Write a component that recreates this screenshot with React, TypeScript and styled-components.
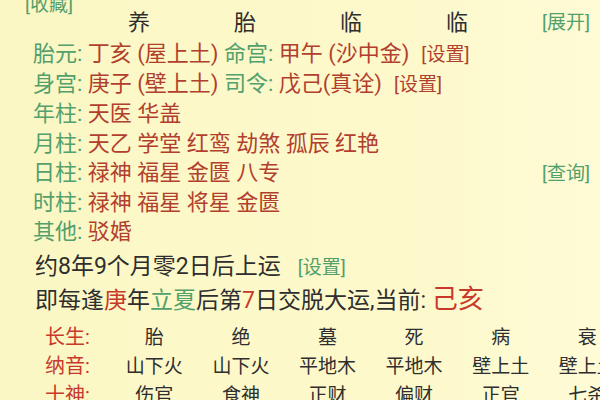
import React from 'react';
import styled, { createGlobalStyle } from 'styled-components';

const GlobalStyle = createGlobalStyle`
  html, body {
    margin: 0;
    padding: 0;
  }
  body {
    font-family: Roboto, "Noto Sans CJK SC", sans-serif;
    background: #fcf8c8;
  }
`;

const GREEN = '#52a06c';
const BROWN = '#b23f2e';
const RED = '#c8392b';
const DARK = '#2e2e2e';

const Page = styled.div`
  width: 600px;
  height: 400px;
  overflow: hidden;
  background: linear-gradient(90deg, #fbf7c4 0%, #fdf9cc 70%, #fefbd6 100%);
  color: ${DARK};
`;

const TopStrip = styled.div`
  padding-left: 25px;
  margin-top: -5px;
  margin-bottom: -5px;
  line-height: 20px;
`;

const Link = styled.span<{ $tone: 'green' | 'red' }>`
  font-size: 19px;
  color: ${(p) => (p.$tone === 'green' ? GREEN : BROWN)};
  white-space: nowrap;
`;

const HeaderRow = styled.div`
  display: grid;
  grid-template-columns: 86px repeat(4, 106px) 1fr;
  align-items: center;
  line-height: 22px;
  font-size: 22px;
  padding-right: 10px;
`;

const HeadCell = styled.span`
  text-align: center;
`;

const RightCell = styled.span`
  text-align: right;
`;

const Info = styled.div`
  margin-top: 5px;
  padding: 0 10px 0 33px;
`;

const InfoRow = styled.div`
  display: flex;
  align-items: baseline;
  line-height: 29.2px;
  font-size: 22px;
  white-space: nowrap;
`;

const Label = styled.span`
  color: ${GREEN};
`;

const Value = styled.span`
  color: ${BROWN};
`;

const Gap = styled.span<{ $w?: number }>`
  margin-left: ${(p) => p.$w ?? 12}px;
`;

const PushRight = styled.span`
  margin-left: auto;
`;

const Luck = styled.div`
  margin-top: 5px;
  padding-left: 35px;
  font-size: 23px;
  white-space: nowrap;
`;

const LuckLine = styled.div<{ $h: number }>`
  line-height: ${(p) => p.$h}px;
  display: flex;
  align-items: baseline;
`;

const Tint = styled.span<{ $c: string; $size?: number }>`
  color: ${(p) => p.$c};
  ${(p) => (p.$size ? `font-size: ${p.$size}px;` : '')}
`;

const Table = styled.div`
  margin-top: 7px;
  padding-left: 45px;
  display: grid;
  grid-template-columns: 66px repeat(6, 86.6px);
  font-size: 19px;
  line-height: 29px;
  white-space: nowrap;
`;

const RowLabel = styled.span`
  color: ${RED};
  font-size: 20px;
`;

const Cell = styled.span`
  text-align: center;
  color: ${DARK};
`;

const pillars = ['养', '胎', '临', '临'];

const rows = [
  { label: '年柱', value: '天医 华盖' },
  { label: '月柱', value: '天乙 学堂 红鸾 劫煞 孤辰 红艳' },
  { label: '日柱', value: '禄神 福星 金匮 八专', link: '[查询]' },
  { label: '时柱', value: '禄神 福星 将星 金匮' },
  { label: '其他', value: '驳婚' },
];

const table = [
  { label: '长生', cells: ['胎', '绝', '墓', '死', '病', '衰'] },
  { label: '纳音', cells: ['山下火', '山下火', '平地木', '平地木', '壁上土', '壁上土'] },
  { label: '十神', cells: ['伤官', '食神', '正财', '偏财', '正官', '七杀'] },
];

export default function App() {
  return (
    <Page>
      <GlobalStyle />
      <TopStrip>
        <Link $tone="green">[收藏]</Link>
      </TopStrip>
      <HeaderRow>
        <span />
        {pillars.map((p, i) => (
          <HeadCell key={i}>{p}</HeadCell>
        ))}
        <RightCell>
          <Link $tone="green">[展开]</Link>
        </RightCell>
      </HeaderRow>

      <Info>
        <InfoRow>
          <Label>胎元:&nbsp;</Label>
          <Value>丁亥 (屋上土)&nbsp;</Value>
          <Label>命宫:&nbsp;</Label>
          <Value>甲午 (沙中金)</Value>
          <Gap>
            <Link $tone="red">[设置]</Link>
          </Gap>
        </InfoRow>
        <InfoRow>
          <Label>身宫:&nbsp;</Label>
          <Value>庚子 (壁上土)&nbsp;</Value>
          <Label>司令:&nbsp;</Label>
          <Value>戊己(真诠)</Value>
          <Gap>
            <Link $tone="red">[设置]</Link>
          </Gap>
        </InfoRow>
        {rows.map((r) => (
          <InfoRow key={r.label}>
            <Label>{r.label}:&nbsp;</Label>
            <Value>{r.value}</Value>
            {r.link && (
              <PushRight>
                <Link $tone="green">{r.link}</Link>
              </PushRight>
            )}
          </InfoRow>
        ))}
      </Info>

      <Luck>
        <LuckLine $h={32}>
          约8年9个月零2日后上运
          <Gap $w={17}>
            <Link $tone="green">[设置]</Link>
          </Gap>
        </LuckLine>
        <LuckLine $h={31}>
          即每逢<Tint $c={RED}>庚</Tint>年<Tint $c={GREEN}>立夏</Tint>后第
          <Tint $c={RED}>7</Tint>日交脱大运,当前:&nbsp;
          <Tint $c={RED} $size={26}>
            己亥
          </Tint>
        </LuckLine>
      </Luck>

      <Table>
        {table.map((row) => (
          <React.Fragment key={row.label}>
            <RowLabel>{row.label}:</RowLabel>
            {row.cells.map((c, i) => (
              <Cell key={i}>{c}</Cell>
            ))}
          </React.Fragment>
        ))}
      </Table>
    </Page>
  );
}
